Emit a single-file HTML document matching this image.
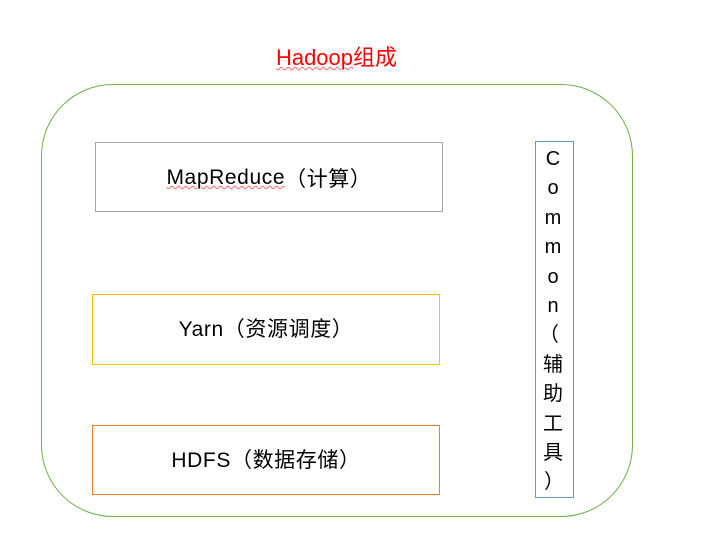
<!DOCTYPE html>
<html><head><meta charset="utf-8"><style>
body{margin:0;width:707px;height:548px;background:#fff;position:relative;overflow:hidden;font-family:"Liberation Sans","Noto Sans CJK SC",sans-serif}
.a{position:absolute;box-sizing:border-box}
.t{display:flex;align-items:center;justify-content:center;font-size:21px;letter-spacing:0.6px;color:#000}
</style></head><body>
<div class="a" style="left:0;width:707px;top:40px;text-align:center;font-size:22px;color:#f00"><span style="position:relative;left:-17px;text-decoration:underline wavy #f66 1px">Hadoop</span><span style="position:relative;left:-17px">组成</span></div>
<div class="a" style="left:41px;top:84px;width:592px;height:433px;border:1.3px solid #70ad47;border-radius:72px"></div>
<div class="a t" style="left:95px;top:142px;width:348px;height:70px;border:1px solid #a5a5a5;padding-top:2px"><span style="text-decoration:underline wavy #f66 1px">MapReduce</span>（计算）</div>
<div class="a t" style="left:92px;top:294px;width:348px;height:71px;border:1px solid #ffc000;padding-bottom:4px">Yarn（资源调度）</div>
<div class="a t" style="left:92px;top:425px;width:348px;height:70px;border:1px solid #ed7d31;padding-bottom:2px">HDFS（数据存储）</div>
<div class="a" style="left:535px;top:141px;width:39px;height:357px;border:1px solid #5b9bd5;font-size:20px;line-height:29.4px;text-align:center;padding-top:3px;padding-right:3px">C<br>o<br>m<br>m<br>o<br>n<br><span style="position:relative;left:-4px">（</span><br>辅<br>助<br>工<br>具<br><span style="position:relative;left:1px">）</span></div>
</body></html>
